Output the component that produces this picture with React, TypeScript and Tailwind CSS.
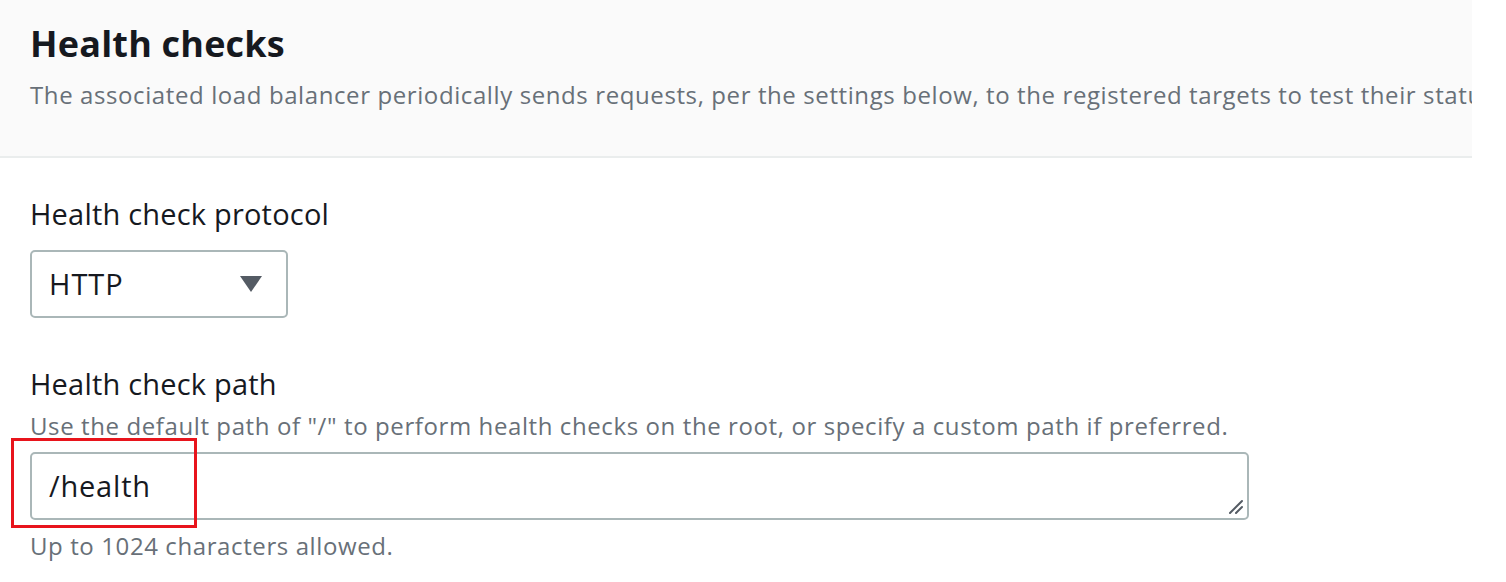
import React from 'react';

export default function App() {
  return (
    <div
      className="w-[1506px] h-[582px] bg-white overflow-hidden"
      style={{ fontFamily: '"Open Sans", "Noto Sans", Arial, sans-serif' }}
    >
      <div className="w-[1472px] h-[158px] bg-[#fafafa] border-b-2 border-[#eaeded] overflow-hidden pl-[30px] pt-[20px]">
        <h2 className="text-[36px] leading-[48px] font-bold text-[#16191f] tracking-[0.2px]">
          Health checks
        </h2>
        <p className="mt-[11px] text-[24px] leading-[32px] text-[#687078] tracking-[0.6px] whitespace-nowrap">
          The associated load balancer periodically sends requests, per the settings below, to the registered targets to test their status.
        </p>
      </div>

      <div className="pl-[30px] pt-[36px]">
        <div className="text-[29px] leading-[40px] text-[#16191f] tracking-[0.2px]">Health check protocol</div>
        <div className="mt-[16px] w-[258px] h-[68px] border-2 border-[#aab7b8] rounded-[5px] flex items-center justify-between pl-[17px] pr-[24px]">
          <span className="text-[29px] tracking-[1px] text-[#16191f]">HTTP</span>
          <svg width="22" height="16" viewBox="0 0 22 16">
            <path d="M0 0 H22 L11 16 Z" fill="#545b64" />
          </svg>
        </div>

        <div className="mt-[46px] text-[29px] leading-[40px] text-[#16191f] tracking-[0.2px]">Health check path</div>
        <div className="mt-[6px] text-[24px] leading-[32px] text-[#687078] tracking-[0.6px] whitespace-nowrap">
          Use the default path of "/" to perform health checks on the root, or specify a custom path if preferred.
        </div>
        <div className="relative mt-[10px] w-[1219px] h-[68px] border-2 border-[#aab7b8] rounded-[5px] flex items-center pl-[17px]">
          <span className="text-[29px] tracking-[0.8px] text-[#16191f]">/health</span>
          <svg className="absolute right-[4px] bottom-[4px]" width="16" height="16" viewBox="0 0 16 16">
            <path d="M15 3 L3 15 M15 9 L9 15" stroke="#545b64" strokeWidth="2" strokeLinecap="round" />
          </svg>
          <div className="absolute left-[-21px] top-[-16px] w-[186px] h-[90px] border-[3px] border-[#e8141c]" />
        </div>
        <div className="mt-[10px] text-[24px] leading-[32px] text-[#687078] tracking-[0.6px]">Up to 1024 characters allowed.</div>
      </div>
    </div>
  );
}
